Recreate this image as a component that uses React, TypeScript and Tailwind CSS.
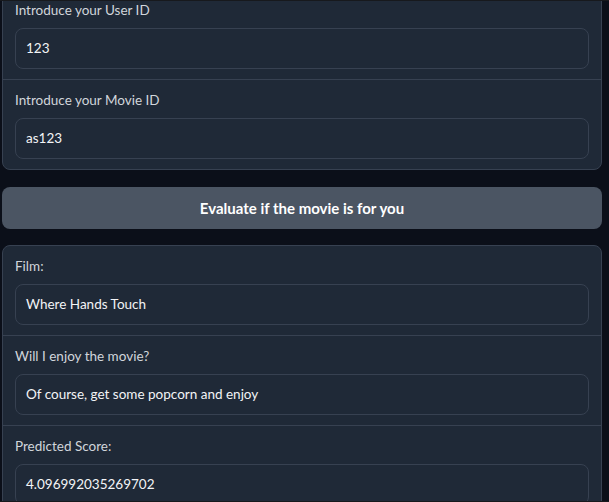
import React from 'react';

interface FieldProps {
  label: string;
  value: string;
  first?: boolean;
}

const Field: React.FC<FieldProps> = ({ label, value, first }) => (
  <div className={`px-[12px] pt-[10px] pb-[10px] ${first ? '' : 'border-t border-[#374151]'}`}>
    <div className="text-[13.5px] leading-[20px] text-[#d1d5db] mb-[8px]">{label}</div>
    <div className="h-[41px] rounded-[8px] border border-[#374151] bg-[#1f2937] px-[10px] flex items-center text-[13.5px] text-[#f3f4f6]">
      {value}
    </div>
  </div>
);

export default function App() {
  return (
    <div
      className="h-[502px] overflow-hidden bg-[#0b0f19] border-y border-[#17191d] px-[2px]"
      style={{ fontFamily: 'Lato, "Noto Sans", sans-serif' }}
    >
      <div className="mt-[-12px] w-[600px] flex flex-col gap-[16px]">
        <div className="rounded-[8px] border border-[#374151] bg-[#1f2937]">
          <Field first label="Introduce your User ID" value="123" />
          <Field label="Introduce your Movie ID" value="as123" />
        </div>

        <button className="mt-px h-[42px] w-full rounded-[8px] bg-[#4b5563] text-white font-bold text-[15px]">
          Evaluate if the movie is for you
        </button>

        <div className="rounded-[8px] border border-[#374151] bg-[#1f2937]">
          <Field first label="Film:" value="Where Hands Touch" />
          <Field label="Will I enjoy the movie?" value="Of course, get some popcorn and enjoy" />
          <Field label="Predicted Score:" value="4.096992035269702" />
        </div>
      </div>
    </div>
  );
}
